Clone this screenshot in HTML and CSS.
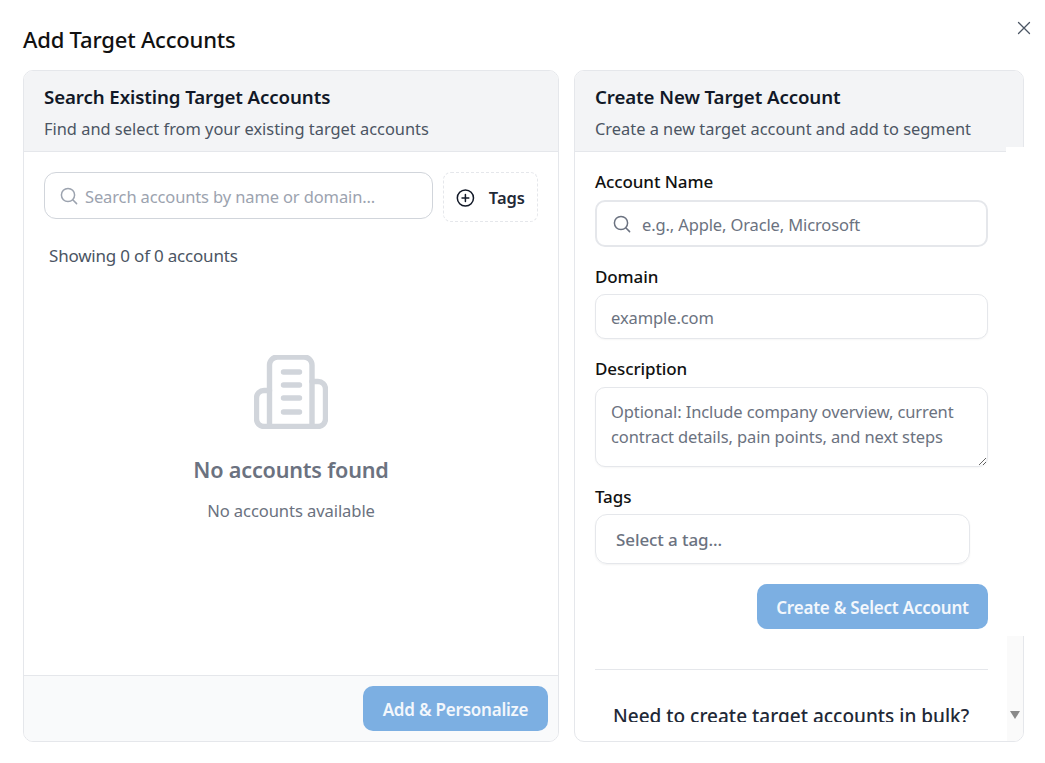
FILE: index.html
```html
<!DOCTYPE html>
<html lang="en">
<head>
<meta charset="utf-8">
<title>Add Target Accounts</title>
<link rel="stylesheet" href="styles.css">
</head>
<body>
<div class="modal">
  <button class="close" aria-label="Close">
    <svg width="16" height="16" viewBox="0 0 16 16" fill="none" stroke="#4b5563" stroke-width="1.3" stroke-linecap="round"><path d="M2.5 2.5l11 11M13.5 2.5l-11 11"/></svg>
  </button>
  <h1 class="title">Add Target Accounts</h1>
  <div class="panels">
    <section class="panel panel-left">
      <header class="panel-head">
        <h2>Search Existing Target Accounts</h2>
        <p>Find and select from your existing target accounts</p>
      </header>
      <div class="left-body">
        <div class="search-row">
          <div class="search-box">
            <svg class="search-icon" width="20" height="20" viewBox="0 0 20 20" fill="none" stroke="#9ca3af" stroke-width="1.5" stroke-linecap="round"><circle cx="9" cy="9" r="6.6"/><path d="M14 14l3.6 3.6"/></svg>
            <input class="bare-input" placeholder="Search accounts by name or domain...">
          </div>
          <button class="tags-btn">
            <svg width="20" height="20" viewBox="0 0 20 20" fill="none" stroke="#111827" stroke-width="1.6" stroke-linecap="round"><circle cx="10" cy="10" r="8.6"/><path d="M10 6.4v7.2M6.4 10h7.2"/></svg>
            <span>Tags</span>
          </button>
        </div>
        <div class="showing">Showing 0 of 0 accounts</div>
        <div class="empty">
          <svg width="74" height="74" viewBox="0 0 74 74" fill="none" stroke="#d1d5db" stroke-width="5.4" stroke-linecap="round" stroke-linejoin="round"><path d="M15.5 71V10a8 8 0 0 1 8-8H50a8 8 0 0 1 8 8v61"/><path d="M15.5 35.5H10A7.5 7.5 0 0 0 2.5 43v21a7.5 7.5 0 0 0 7.5 7.5h54a7.5 7.5 0 0 0 7.5-7.5V34a7.5 7.5 0 0 0-7.5-7.5h-6"/><path d="M29.5 17h16M29.5 30h16M29.5 43h16M29.5 57h16"/></svg>
          <h3>No accounts found</h3>
          <p>No accounts available</p>
        </div>
      </div>
      <footer class="left-foot">
        <button class="primary">Add &amp; Personalize</button>
      </footer>
    </section>
    <section class="panel panel-right">
      <header class="panel-head">
        <h2>Create New Target Account</h2>
        <p>Create a new target account and add to segment</p>
      </header>
      <div class="right-body">
        <div class="form">
          <label class="label label-first">Account Name</label>
          <div class="name-box">
            <svg width="20" height="20" viewBox="0 0 20 20" fill="none" stroke="#6b7280" stroke-width="1.5" stroke-linecap="round"><circle cx="9" cy="9" r="6.6"/><path d="M14 14l3.6 3.6"/></svg>
            <input class="bare-input" placeholder="e.g., Apple, Oracle, Microsoft">
          </div>
          <label class="label label-domain">Domain</label>
          <input class="field" placeholder="example.com">
          <label class="label label-desc">Description</label>
          <textarea class="field area" placeholder="Optional: Include company overview, current contract details, pain points, and next steps"></textarea>
          <label class="label label-tags">Tags</label>
          <div class="select">Select a tag...</div>
          <div class="create-row"><button class="primary create">Create &amp; Select Account</button></div>
          <hr class="rule">
          <div class="bulk">Need to create target accounts in bulk?</div>
        </div>
      </div>
      <div class="scroll-mask"></div>
      <div class="scroll-track"><span class="scroll-arrow"></span></div>
    </section>
  </div>
</div>
</body>
</html>
```
FILE: styles.css
```css
* { box-sizing: border-box; }
html, body { margin: 0; height: 100%; background: #fff; overflow: hidden; }
body { font-family: "Noto Sans", "Open Sans", sans-serif; color: #111827; }
button, input, textarea { font-family: inherit; }
.modal { position: relative; width: 1045px; height: 763px; padding: 24px 21px 21px 23px; display: flex; flex-direction: column; }
.close { position: absolute; top: 20px; right: 13px; width: 16px; height: 16px; padding: 0; border: 0; background: none; display: flex; }
.title { margin: 0 0 15px; font-size: 22px; line-height: 31px; font-weight: 500; color: #111; letter-spacing: -.2px; }
.panels { display: grid; grid-template-columns: 536px 450px; column-gap: 15px; height: 672px; }
.panel { position: relative; border: 1px solid #e5e7eb; border-radius: 10px; display: flex; flex-direction: column; background: #fff; }
.panel-head { height: 81px; flex: none; background: #f3f4f6; border-bottom: 1px solid #e5e7eb; border-radius: 9px 9px 0 0; padding: 12px 20px 0; }
.panel-head h2 { margin: 0; font-size: 18.7px; line-height: 27px; font-weight: 600; color: #111827; letter-spacing: -.1px; white-space: nowrap; }
.panel-head p { margin: 7px 0 0; font-size: 16.4px; line-height: 24px; color: #4b5563; white-space: nowrap; }
.left-body { flex: 1; padding: 20px 20px 0; min-height: 0; }
.search-row { display: flex; gap: 10px; align-items: flex-start; }
.search-box { flex: none; width: 389px; height: 47px; border: 1px solid #d1d5db; border-radius: 12px; display: flex; align-items: center; gap: 6px; padding: 1px 14px 0; }
.bare-input { flex: 1; min-width: 0; border: 0; outline: 0; padding: 0; font-size: 16.5px; color: #111827; background: none; letter-spacing: -.13px; }
.bare-input::placeholder, .field::placeholder { color: #6b7280; opacity: 1; }
.search-box .bare-input::placeholder { color: #9ca3af; }
.tags-btn { flex: none; width: 95px; height: 50px; border: 1px dashed #e5e7eb; border-radius: 8px; background: #fff; display: flex; align-items: center; gap: 14px; padding: 1px 12px 0; font-size: 16.5px; font-weight: 600; color: #1f2937; }
.showing { margin: 21px 0 0 5px; font-size: 17px; line-height: 26px; color: #4b5563; letter-spacing: -.2px; }
.empty { margin-top: 86px; display: flex; flex-direction: column; align-items: center; }
.empty svg { display: block; }
.empty h3 { margin: 24px 0 0; font-size: 21.6px; line-height: 33px; font-weight: 600; color: #6b7280; letter-spacing: -.2px; }
.empty p { margin: 12px 0 0; font-size: 16.6px; line-height: 26px; color: #6b7280; letter-spacing: -.1px; }
.left-foot { flex: none; height: 66px; background: #f9fafb; border-top: 1px solid #e5e7eb; border-radius: 0 0 9px 9px; padding: 10px 10px 0 0; display: flex; justify-content: flex-end; align-items: flex-start; }
.primary { height: 45px; width: 185px; padding: 2px 0 0; border: 0; border-radius: 10px; background: #7cafe2; color: #f3f7fc; font-size: 17px; font-weight: 600; letter-spacing: -.22px; }
.right-body { flex: none; height: 570px; overflow: hidden; padding: 0 35px 0 20px; }
.form { display: flex; flex-direction: column; align-items: stretch; }
.label { display: block; margin-top: 16px; margin-bottom: 5px; font-size: 17px; line-height: 25px; font-weight: 500; color: #111; letter-spacing: -.1px; }
.label-first { margin-top: 17px; margin-bottom: 6px; }
.label-domain, .label-tags { margin-top: 17px; }
.label-desc { margin-top: 17px; margin-bottom: 6px; }
.name-box { height: 47px; border: 2px solid #e5e7eb; border-radius: 10px; display: flex; align-items: center; gap: 10px; padding: 1px 15px 0; }
.field { display: block; width: 100%; height: 45px; border: 1px solid #e5e7eb; border-radius: 10px; padding: 2px 15px 0; font-size: 16.5px; outline: 0; letter-spacing: -.1px; color: #111827; box-shadow: 0 1px 2px rgba(0,0,0,.04); }
.area { height: 80px; padding: 11px 15px; line-height: 25px; }
.select { width: 375px; height: 50px; border: 1px solid #e5e7eb; border-radius: 12px; padding: 0 20px; display: flex; align-items: center; font-size: 17px; font-weight: 500; color: #6b7280; letter-spacing: -.1px; box-shadow: 0 1px 2px rgba(0,0,0,.05); }
.create-row { display: flex; justify-content: flex-end; margin-top: 20px; }
.create { width: 231px; }
.rule { width: 100%; height: 1px; margin: 40px 0 0; border: 0; background: #e5e7eb; }
.bulk { margin: 33px 0 0 18px; font-size: 19px; line-height: 27px; font-weight: 500; color: #1f2937; white-space: nowrap; }
.scroll-mask { position: absolute; top: 76px; right: -1px; width: 18px; height: 489px; background: #fff; }
.scroll-track { position: absolute; top: 565px; right: 0; bottom: 0; width: 16px; background: #fafafa; border-radius: 0 0 9px 0; }
.scroll-arrow { position: absolute; left: 3px; top: 75px; width: 0; height: 0; border-left: 5px solid transparent; border-right: 5px solid transparent; border-top: 8px solid #8a8a8a; }
```
